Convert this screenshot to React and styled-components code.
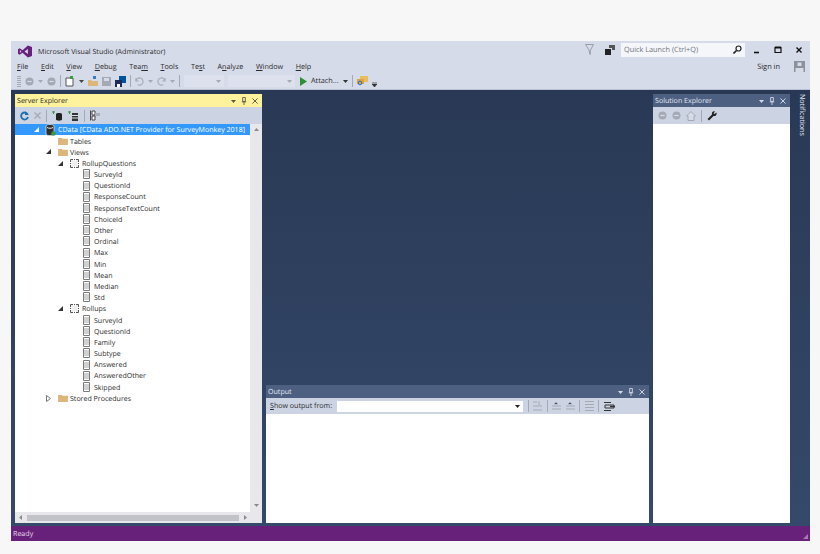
import React from "react";
import styled, { createGlobalStyle } from "styled-components";

const GlobalStyle = createGlobalStyle`
  html, body {
    margin: 0;
    padding: 0;
    background: #f7f7f7;
  }
  body {
    font-family: "Open Sans", "Noto Sans", sans-serif;
    text-rendering: geometricPrecision;
    overflow: hidden;
  }
`;

const rollupQuestions = [
  "SurveyId", "QuestionId", "ResponseCount", "ResponseTextCount", "ChoiceId", "Other",
  "Ordinal", "Max", "Min", "Mean", "Median", "Std",
];
const rollups = ["SurveyId", "QuestionId", "Family", "Subtype", "Answered", "AnsweredOther", "Skipped"];
const menus = [
  ["F", "ile"], ["E", "dit"], ["V", "iew"], ["D", "ebug"], ["Tea", "m", true], ["T", "ools"],
  ["Te", "s", true, "t"], ["A", "n", true, "alyze"], ["W", "indow"], ["H", "elp"],
];

function VsLogo() {
  return (
    <svg width="14" height="13" viewBox="0 0 15 13">
      <path fill="#68217a" d="M10.600 0 15 1.800v9.400L10.600 13 4.800 7.800 1.800 10 0 9V4l1.800-1 3 2.200zM2 5v3l1.600-1.500zm5 1.500 3.600 2.800V3.700z" />
    </svg>
  );
}

function Circle({ color = "#a5a9b3" }) {
  return (
    <svg width="9" height="9" viewBox="0 0 9 9">
      <circle cx="4.500" cy="4.500" r="4" fill={color} />
      <path d="M2.300 4.500h4.400" stroke="#d6dbe9" strokeWidth="1.200" />
    </svg>
  );
}

function Caret({ color = "#70747d" }) {
  return (
    <svg width="5" height="3" viewBox="0 0 5 3">
      <path d="M0 0h5L2.500 3z" fill={color} />
    </svg>
  );
}

function PaneControls({ color }) {
  return (
    <PaneButtons>
      <Caret color={color} />
      <svg width="6" height="8" viewBox="0 0 6 9">
        <path d="M1.500.500h3v4.500h-3zM.500 5.500h5M3 5.500V9" fill="none" stroke={color} />
      </svg>
      <svg width="6" height="6" viewBox="0 0 7 7">
        <path d="M.500.500l6 6M6.500.500l-6 6" stroke={color} strokeWidth="1.100" />
      </svg>
    </PaneButtons>
  );
}

function ColumnIcon() {
  return (
    <svg width="7" height="10" viewBox="0 0 7 10">
      <path d="M.500.500h6v9h-6z" fill="#fff" stroke="#7a7a7a" />
      <path d="M.500 3h6M.500 5h6M.500 7h6" stroke="#8a8a8a" strokeWidth=".8" />
    </svg>
  );
}

function FolderIcon() {
  return (
    <svg width="10" height="8" viewBox="0 0 11 9">
      <path d="M0 1h4l1 1h6v7H0z" fill="#dcb67a" />
    </svg>
  );
}

function ViewIcon() {
  return (
    <svg width="9" height="9" viewBox="0 0 9 9">
      <path d="M.500.500h8v8h-8z" fill="#f0f0f0" stroke="#555" />
      <path d="M3.500 0v2M5.500 0v2M3.500 7v2M5.500 7v2M0 3.500h2M0 5.500h2M7 3.500h2M7 5.500h2" stroke="#fff" />
    </svg>
  );
}

function Expander({ open, light }) {
  return open ? (
    <svg width="5" height="5" viewBox="0 0 5 5">
      <path d="M5 0v5H0z" fill={light ? "#fff" : "#333"} />
    </svg>
  ) : (
    <svg width="5" height="7" viewBox="0 0 5 7">
      <path d="M.500.500l4 3-4 3z" fill="#fff" stroke="#777" />
    </svg>
  );
}

function ServerIcon() {
  return (
    <svg width="11" height="12" viewBox="0 0 11 12">
      <path d="M1 2c0-2 8-2 8 0v8c0 2-8 2-8 0z" fill="#2f2f2f" stroke="#eee" strokeWidth=".7" />
      <path d="M2 3.500c1.500 1 4.500 1 6 0" stroke="#eee" fill="none" />
      <circle cx="8.500" cy="9.500" r="2.300" fill="#3a9a3f" />
    </svg>
  );
}

function TreeRow({ level, label, selected, expander, icon }) {
  return (
    <Row $selected={selected} $level={level}>
      <ExpanderSlot>{expander}</ExpanderSlot>
      <IconSlot>{icon}</IconSlot>
      <RowLabel $selected={selected}>{label}</RowLabel>
    </Row>
  );
}

export default function App() {
  return (
    <>
      <GlobalStyle />
      <Window>
        <TitleBar>
          <LogoSlot><VsLogo /></LogoSlot>
          <TitleText>Microsoft Visual Studio (Administrator)</TitleText>
          <TitleRight>
            <svg width="9" height="11" viewBox="0 0 9 11">
              <path d="M.500.500h8L5.500 6 5 10.500 4 6z" fill="none" stroke="#8b8f99" strokeWidth=".8" />
            </svg>
            <svg width="10" height="10" viewBox="0 0 10 10">
              <path d="M4 0h6v5H7V3H4z" fill="#555" />
              <path d="M0 4h6v6H0z" fill="#222" />
            </svg>
            <QuickLaunch>
              <span>Quick Launch (Ctrl+Q)</span>
              <svg width="9" height="9" viewBox="0 0 9 9">
                <circle cx="5.500" cy="3.500" r="2.500" fill="none" stroke="#222" strokeWidth="1.200" />
                <path d="M3.500 5.500 .500 8.500" stroke="#222" strokeWidth="1.600" />
              </svg>
            </QuickLaunch>
            <WindowButtons>
              <svg width="8" height="8" viewBox="0 0 8 8"><path d="M1 6.500h5" stroke="#111" strokeWidth="1.600" /></svg>
              <svg width="8" height="8" viewBox="0 0 8 8"><path d="M1 1.500h6v5H1z" fill="none" stroke="#111" strokeWidth="1.200" /><path d="M1 1.500h6" stroke="#111" strokeWidth="2" /></svg>
              <svg width="8" height="8" viewBox="0 0 8 8"><path d="M1.500 1.500l5 5M6.500 1.500l-5 5" stroke="#111" strokeWidth="1.400" /></svg>
            </WindowButtons>
          </TitleRight>
        </TitleBar>

        <MenuBar>
          <MenuList>
            {menus.map(([a, b, mid, c]) => (
              <MenuItem key={a + b}>
                {mid ? <>{a}<u>{b}</u>{c}</> : <><u>{a}</u>{b}</>}
              </MenuItem>
            ))}
          </MenuList>
          <SignIn>Sign in</SignIn>
          <Avatar>
            <svg width="11" height="11" viewBox="0 0 11 11">
              <path d="M0 0h11v11H0z" fill="#8d919b" />
              <path d="M3.500 1.500h4v3.500h-4zM1.500 7h8v4h-8z" fill="#d6dbe9" />
            </svg>
          </Avatar>
        </MenuBar>

        <ToolBar>
          <Gripper />
          <Circle />
          <Caret color="#a5a9b3" />
          <Circle />
          <Sep />
          <svg width="10" height="11" viewBox="0 0 10 11">
            <path d="M1 2h7v8H1z" fill="#fff" stroke="#555" />
            <path d="M5 0h3v3H5z" fill="#3a9a3f" />
          </svg>
          <Caret color="#444" />
          <svg width="10" height="10" viewBox="0 0 10 10">
            <path d="M0 4h3l1 1h6v5H0z" fill="#dcb67a" />
            <path d="M5 0h3v3H5z" fill="#3a7cc2" />
          </svg>
          <svg width="9" height="9" viewBox="0 0 9 9">
            <path d="M0 0h9v9H0z" fill="#a5a9b3" />
            <path d="M2 1h5v3H2z" fill="#d6dbe9" />
          </svg>
          <svg width="11" height="11" viewBox="0 0 11 11">
            <path d="M4 0h7v7H4z" fill="#00539c" />
            <path d="M0 4h7v7H0z" fill="#1b2b5c" />
            <path d="M2 8h3v3H2z" fill="#fff" />
          </svg>
          <Sep />
          <svg width="9" height="9" viewBox="0 0 10 9">
            <path d="M1 4a4 4 0 1 1 2 4M1 1v3h3" fill="none" stroke="#a5a9b3" strokeWidth="1.200" />
          </svg>
          <Caret color="#a5a9b3" />
          <svg width="9" height="9" viewBox="0 0 10 9">
            <path d="M9 4a4 4 0 1 0-2 4M9 1v3H6" fill="none" stroke="#a5a9b3" strokeWidth="1.200" />
          </svg>
          <Caret color="#a5a9b3" />
          <Sep />
          <ToolCombo $width={40}><Caret color="#a5a9b3" /></ToolCombo>
          <ToolCombo $width={67} $after={1}><Caret color="#a5a9b3" /></ToolCombo>
          <svg width="7" height="9" viewBox="0 0 7 9"><path d="M0 0l7 4.500L0 9z" fill="#2f8f35" /></svg>
          <AttachText>Attach...</AttachText>
          <Caret color="#333" />
          <Sep />
          <svg width="11" height="10" viewBox="0 0 11 10">
            <path d="M3 0h8v6H3z" fill="#e9bd5b" />
            <path d="M0 3h7v5H0z" fill="#d9a441" />
            <circle cx="3" cy="7" r="1.800" fill="none" stroke="#2a6fb5" />
          </svg>
          <Overflow>
            <svg width="5" height="5" viewBox="0 0 5 5"><path d="M0 0h5M0 2h5l-2.500 3z" stroke="#333" strokeWidth=".7" fill="#333" /></svg>
          </Overflow>
        </ToolBar>

        <DockArea>
          <ServerPane>
            <PaneTitle $active>
              <span>Server Explorer</span>
              <PaneControls color="#5a5746" />
            </PaneTitle>
            <PaneToolbar>
              <svg width="9" height="10" viewBox="0 0 9 10">
                <path d="M7.500 3a3.500 3.500 0 1 0 .5 3" fill="none" stroke="#1c6fb0" strokeWidth="1.800" />
                <path d="M5 0v4h4z" fill="#1c6fb0" />
              </svg>
              <svg width="7" height="7" viewBox="0 0 7 7">
                <path d="M.500.500l6 6M6.500.500l-6 6" stroke="#a5a9b3" strokeWidth="1.200" />
              </svg>
              <Sep />
              <svg width="11" height="10" viewBox="0 0 11 10">
                <path d="M0 1h3M1.500 0v3" stroke="#3a9a3f" />
                <path d="M4 3c0-1.500 6-1.500 6 0v5.500c0 1.500-6 1.500-6 0z" fill="#222" />
              </svg>
              <svg width="11" height="10" viewBox="0 0 11 10">
                <path d="M0 1h3M1.500 0v3" stroke="#3a9a3f" />
                <path d="M4 2h6v8H4z" fill="#333" />
                <path d="M4 4.500h6M4 7h6" stroke="#d6dbe9" />
              </svg>
              <Sep />
              <svg width="10" height="11" viewBox="0 0 10 11">
                <path d="M.500.500v10M2 1h3v4H2zM2 6h3v4H2z" fill="#fff" stroke="#444" />
                <path d="M5 3h5v3H5z" fill="#a8adb8" />
              </svg>
            </PaneToolbar>
            <TreeBody>
              <TreeScroll>
                <TreeList>
                  <TreeRow level={0} selected label="CData [CData ADO.NET Provider for SurveyMonkey 2018]" expander={<Expander open light />} icon={<ServerIcon />} />
                  <TreeRow level={1} label="Tables" icon={<FolderIcon />} />
                  <TreeRow level={1} label="Views" expander={<Expander open />} icon={<FolderIcon />} />
                  <TreeRow level={2} label="RollupQuestions" expander={<Expander open />} icon={<ViewIcon />} />
                  {rollupQuestions.map((c) => <TreeRow key={"q" + c} level={3} label={c} icon={<ColumnIcon />} />)}
                  <TreeRow level={2} label="Rollups" expander={<Expander open />} icon={<ViewIcon />} />
                  {rollups.map((c) => <TreeRow key={"r" + c} level={3} label={c} icon={<ColumnIcon />} />)}
                  <TreeRow level={1} label="Stored Procedures" expander={<Expander />} icon={<FolderIcon />} />
                </TreeList>
                <VScroll>
                  <svg width="5" height="3" viewBox="0 0 5 3"><path d="M0 3h5L2.500 0z" fill="#8a8a8a" /></svg>
                  <Caret color="#8a8a8a" />
                </VScroll>
              </TreeScroll>
              <HScroll>
                <svg width="3" height="5" viewBox="0 0 3 5"><path d="M3 0v5L0 2.500z" fill="#8a8a8a" /></svg>
                <HThumb />
                <svg width="3" height="5" viewBox="0 0 3 5"><path d="M0 0v5l3-2.500z" fill="#8a8a8a" /></svg>
              </HScroll>
            </TreeBody>
          </ServerPane>

          <CenterColumn>
            <OutputPane>
              <PaneTitle>
                <span>Output</span>
                <PaneControls color="#d6dbe9" />
              </PaneTitle>
              <OutputBar>
                <OutputLabel><u>S</u>how output from:</OutputLabel>
                <OutputSelect><Caret color="#222" /></OutputSelect>
                <Sep />
                <svg width="9" height="10" viewBox="0 0 9 10"><path d="M0 1h4M0 5h9M0 9h9M6 0v4" stroke="#a5a9b3" /></svg>
                <Sep />
                <svg width="9" height="8" viewBox="0 0 9 8"><path d="M0 4h9M0 7h9M4 0l-2 2h4z" stroke="#a5a9b3" /></svg>
                <svg width="9" height="8" viewBox="0 0 9 8"><path d="M0 4h9M0 7h9M4 0l-2 2h4z" stroke="#a5a9b3" /></svg>
                <Sep />
                <svg width="9" height="10" viewBox="0 0 9 10"><path d="M0 .500h9M0 3.500h9M0 6.500h9M0 9.500h9" stroke="#a5a9b3" /></svg>
                <Sep />
                <svg width="11" height="9" viewBox="0 0 11 9">
                  <path d="M0 .500h7M0 8.500h7M1 3h9v3H1z" stroke="#333" fill="none" />
                  <path d="M6 4.500h5" stroke="#333" strokeWidth="1.400" />
                </svg>
              </OutputBar>
              <OutputBody />
            </OutputPane>
          </CenterColumn>

          <SolutionPane>
            <PaneTitle>
              <span>Solution Explorer</span>
              <PaneControls color="#d6dbe9" />
            </PaneTitle>
            <PaneToolbar>
              <Circle />
              <Circle />
              <svg width="10" height="10" viewBox="0 0 10 10">
                <path d="M5 .500.500 5H2v4.500h6V5h1.500z" fill="#d6dbe9" stroke="#a5a9b3" />
              </svg>
              <Sep />
              <svg width="10" height="10" viewBox="0 0 10 10">
                <path d="M9.500 1.500 7.500 3 6.500 2.500 8 .500C6-.5 4.500 1 5 3.500L.500 8l1.500 1.500L6.500 5c2.500.5 3.500-1.500 3-3.500z" fill="#222" />
              </svg>
            </PaneToolbar>
            <SolutionBody />
          </SolutionPane>

          <NotifyTab><span>Notifications</span></NotifyTab>
        </DockArea>

        <StatusBar>
          <span>Ready</span>
          <Resize>
            <svg width="5" height="5" viewBox="0 0 5 5"><path d="M5 0v5H0z" fill="#a57cb0" /></svg>
          </Resize>
        </StatusBar>
      </Window>
    </>
  );
}

const Window = styled.div`
  width: 799px;
  height: 500px;
  margin: 41px 0 0 11px;
  background: #d6dbe9;
  display: flex;
  flex-direction: column;
  color: #2a2a2a;
`;

const TitleBar = styled.div`
  height: 17px;
  flex-shrink: 0;
  display: flex;
  align-items: center;
`;

const LogoSlot = styled.div`
  width: 27px;
  padding-left: 7px;
  box-sizing: border-box;
  display: flex;
  margin-top: 3px;
`;

const TitleText = styled.div`
  margin-top: 5px;
  font-size: 7.100px;
  flex: 1;
`;

const TitleRight = styled.div`
  display: flex;
  align-items: center;
  gap: 11px;
  padding-right: 7px;
`;

const QuickLaunch = styled.div`
  width: 124px;
  height: 14px;
  background: #f5f6fa;
  box-sizing: border-box;
  padding: 0 3px;
  margin-left: -5px;
  display: flex;
  align-items: center;
  justify-content: space-between;
  font-size: 7.300px;
  color: #70747d;
`;

const WindowButtons = styled.div`
  display: flex;
  align-items: center;
  gap: 13px;
  margin-left: -3px;
`;

const MenuBar = styled.div`
  height: 17px;
  flex-shrink: 0;
  display: flex;
  align-items: center;
  padding: 0 5px 0 6px;
`;

const MenuList = styled.div`
  display: flex;
  gap: 12.600px;
  flex: 1;
`;

const MenuItem = styled.span`
  font-size: 7.200px;
`;

const SignIn = styled.span`
  font-size: 7.400px;
  margin-right: 14px;
`;

const Avatar = styled.div`
  display: flex;
`;

const ToolBar = styled.div`
  height: 15px;
  flex-shrink: 0;
  box-sizing: border-box;
  display: flex;
  align-items: center;
  gap: 4px;
  padding: 0 0 2px 6px;
  border-bottom: 1px solid #b9c0d4;
`;

const Gripper = styled.div`
  width: 4px;
  height: 11px;
  background: repeating-linear-gradient(#a5a9b3 0 1px, transparent 1px 2px);
`;

const Sep = styled.div`
  width: 1px;
  height: 12px;
  background: #a5a9b3;
  flex-shrink: 0;
`;

const ToolCombo = styled.div`
  width: ${(p) => p.$width}px;
  height: 12px;
  box-sizing: border-box;
  margin-right: ${(p) => p.$after || 0}px;
  background: #dde1ed;
  display: flex;
  align-items: center;
  justify-content: flex-end;
  padding-right: 3px;
`;

const AttachText = styled.span`
  font-size: 7.300px;
`;

const Overflow = styled.div`
  display: flex;
  align-self: flex-end;
`;

const DockArea = styled.div`
  flex: 1;
  min-height: 0;
  display: flex;
  gap: 4px;
  padding: 4px 0 3px 4px;
  background: linear-gradient(#293955, #35496a);
`;

const Pane = styled.div`
  display: flex;
  flex-direction: column;
  background: #fff;
  min-height: 0;
  min-width: 0;
`;

const ServerPane = styled(Pane)`
  width: 247px;
  flex-shrink: 0;
`;

const SolutionPane = styled(Pane)`
  width: 137px;
  flex-shrink: 0;
`;

const CenterColumn = styled.div`
  width: 383px;
  flex-shrink: 0;
  display: flex;
  flex-direction: column;
  justify-content: flex-end;
`;

const OutputPane = styled(Pane)`
  height: 138px;
`;

const PaneTitle = styled.div`
  height: 13px;
  box-sizing: border-box;
  flex-shrink: 0;
  display: flex;
  align-items: center;
  justify-content: space-between;
  padding: 1px 4px 0 2px;
  font-size: 7.100px;
  background: ${(p) => (p.$active ? "#fff29d" : "#4d6082")};
  color: ${(p) => (p.$active ? "#2a2a2a" : "#e4e8f2")};
`;

const PaneButtons = styled.div`
  display: flex;
  align-items: center;
  gap: 5px;
`;

const PaneToolbar = styled.div`
  height: 17px;
  flex-shrink: 0;
  display: flex;
  align-items: center;
  gap: 5px;
  padding-left: 5px;
  background: #ccd3e3;
`;

const TreeBody = styled.div`
  flex: 1;
  min-height: 0;
  display: flex;
  flex-direction: column;
  background: #fff;
`;

const TreeScroll = styled.div`
  flex: 1;
  min-height: 0;
  display: flex;
`;

const TreeList = styled.div`
  flex: 1;
  min-width: 0;
  overflow: hidden;
`;

const Row = styled.div`
  height: 11.200px;
  display: flex;
  align-items: center;
  padding-left: ${(p) => 19 + p.$level * 12}px;
  background: ${(p) => (p.$selected ? "#3399ff" : "transparent")};
`;

const ExpanderSlot = styled.div`
  width: 9px;
  display: flex;
  align-items: center;
  flex-shrink: 0;
`;

const IconSlot = styled.div`
  width: 15px;
  display: flex;
  justify-content: center;
  align-items: center;
  flex-shrink: 0;
`;

const RowLabel = styled.span`
  font-size: 7.050px;
  white-space: nowrap;
  padding-top: 1.500px;
  color: ${(p) => (p.$selected ? "#fff" : "#2a2a2a")};
`;

const VScroll = styled.div`
  width: 12px;
  flex-shrink: 0;
  background: #e8e8ec;
  display: flex;
  flex-direction: column;
  align-items: center;
  justify-content: space-between;
  padding: 4px 0 5px;
  box-sizing: border-box;
`;

const HScroll = styled.div`
  height: 11px;
  flex-shrink: 0;
  background: #e8e8ec;
  display: flex;
  align-items: center;
  gap: 5px;
  padding: 0 15px 0 4px;
`;

const HThumb = styled.div`
  flex: 1;
  height: 6px;
  background: #c2c3c9;
`;

const OutputBar = styled.div`
  height: 16px;
  flex-shrink: 0;
  display: flex;
  align-items: center;
  gap: 4.500px;
  padding-left: 4px;
  background: #ccd3e3;
`;

const OutputLabel = styled.span`
  font-size: 7.100px;
  width: 63px;
  white-space: nowrap;
  margin-right: -.5px;
`;

const OutputSelect = styled.div`
  width: 186px;
  height: 11px;
  background: #fff;
  display: flex;
  align-items: center;
  justify-content: flex-end;
  padding-right: 3px;
  box-sizing: border-box;
`;

const OutputBody = styled.div`
  flex: 1;
  background: #fff;
`;

const SolutionBody = styled.div`
  flex: 1;
  background: #fff;
`;

const NotifyTab = styled.div`
  width: 16px;
  flex-shrink: 0;
  display: flex;
  justify-content: center;
  span {
    writing-mode: vertical-rl;
    font-size: 7.100px;
    color: #e4e8f2;
  }
`;

const StatusBar = styled.div`
  height: 15px;
  box-sizing: border-box;
  flex-shrink: 0;
  background: #68217a;
  color: #e6d8ea;
  font-size: 7.100px;
  display: flex;
  align-items: center;
  justify-content: space-between;
  padding: 1px 2px 0;
`;

const Resize = styled.div`
  display: flex;
  align-self: flex-end;
  padding-bottom: 2px;
`;
